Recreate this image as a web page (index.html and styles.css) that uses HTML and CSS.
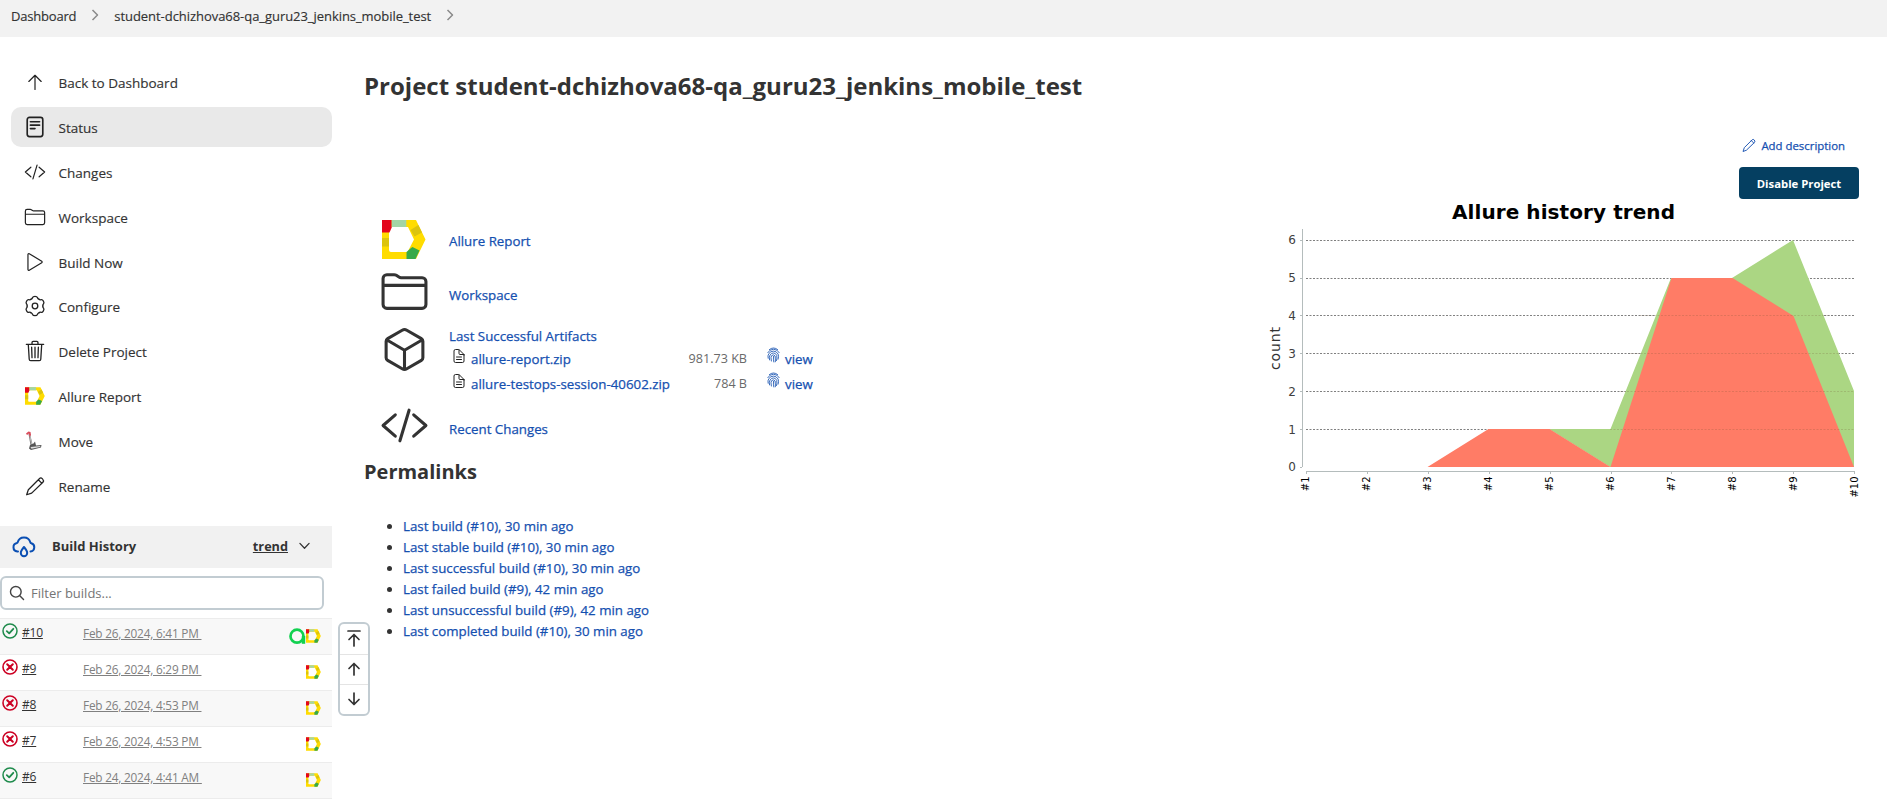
FILE: index.html
```html
<!DOCTYPE html>
<html lang="en">
<head>
<meta charset="utf-8">
<title>student-dchizhova68-qa_guru23_jenkins_mobile_test [Jenkins]</title>
<link rel="stylesheet" href="styles.css">
</head>
<body>
<svg class="defs" aria-hidden="true">
  <symbol id="allure" viewBox="0 0 44 39">
    <path fill="#ffdc00" fill-rule="evenodd" d="M0 0H34L43.5 19.5 34 39H0ZM9 7Q7 7 7 9V30Q7 32 9 32H25.500L32 19.500 26 7Z"/>
    <path fill="#e3061c" d="M0 0H9.700V7.500L7.500 12.500H0Z"/>
    <path fill="#a3d5a6" d="M9.700 0H24.300V7H9.700Z"/>
    <path fill="#dcc40d" d="M36.400 5 40 12.500 32.500 16.500 28.500 10ZM0 18H7V26.500H0Z"/>
    <path fill="#36a94a" d="M24.500 39V32L29 28 30.500 27 37.500 30.500 33.500 39Z"/>
  </symbol>
  <symbol id="folder" viewBox="0 0 512 512"><path d="M440 432H72a40 40 0 01-40-40V120a40 40 0 0140-40h75.890a40 40 0 0122.190 6.720l27.840 18.560A40 40 0 00220.110 112H440a40 40 0 0140 40v240a40 40 0 01-40 40zM32 192H480"/></symbol>
  <symbol id="code" viewBox="0 0 512 512"><path d="M160 368L32 256l128-112M352 368l128-112-128-112M304 96l-96 320"/></symbol>
  <symbol id="pencil" viewBox="0 0 24 24"><path d="M2 22.500 4 16.500 17.500 3Q19 1.500 21 3.500T21.500 7.500L8 20.500ZM16 4.500 20 8.500"/></symbol>
  <symbol id="ok" viewBox="0 0 16 16"><g fill="none" stroke="#1f8b4c" stroke-width="1.500"><circle cx="8" cy="8" r="7"/><path stroke-width="1.800" d="M4.800 8.200 7.200 10.400 11.300 5.800"/></g></symbol>
  <symbol id="fail" viewBox="0 0 16 16"><g fill="none" stroke="#cc0023" stroke-width="1.600"><circle cx="8" cy="8" r="7"/><path stroke-width="2" d="M5.200 5.200 10.800 10.800M10.800 5.200 5.200 10.800"/></g></symbol>
  <symbol id="doc" viewBox="0 0 512 512"><path d="M416 221.250V416a48 48 0 01-48 48H144a48 48 0 01-48-48V96a48 48 0 0148-48h98.750a32 32 0 0122.620 9.370l141.260 141.260a32 32 0 019.370 22.620zM256 56v120a32 32 0 0032 32h120M176 288h160M176 368h160"/></symbol>
  <symbol id="finger" viewBox="0 0 14 17"><path d="M2.500 2.700Q7-1 11.500 2.700M.8 6Q3 2.300 7 2.300T13.200 6M1.200 12Q.5 9 2 7Q4 4.300 7 4.300T12 7.500Q12.900 10 12 13M2.700 13.800Q2 10.500 3.300 8.500 4.700 6.300 7 6.300T10.500 9Q11 11.800 10.300 14.500M4.700 15Q3.700 10.500 5 9.200 7 7.300 8.700 9.500 9.200 12.500 9 15.800M7 10Q6.600 13 7.300 16"/></symbol>
</svg>

<header class="crumbs">
  <span>Dashboard</span>
  <svg class="sep" viewBox="0 0 8 12"><path d="M1.500 1 6.500 6 1.500 11"/></svg>
  <span>student-dchizhova68-qa_guru23_jenkins_mobile_test</span>
  <svg class="sep" viewBox="0 0 8 12"><path d="M1.500 1 6.500 6 1.500 11"/></svg>
</header>

<div class="page">
  <aside class="side">
    <nav class="tasks">
      <a class="task"><svg class="ic" viewBox="0 0 512 512"><path d="M112 244l144-144 144 144M256 120v310"/></svg>Back to Dashboard</a>
      <a class="task active"><svg class="ic" viewBox="0 0 24 24"><g stroke-width="1.800"><rect x="3.500" y="1.500" width="17" height="21" rx="2.500"/><path d="M7 6.300H17M7 10H17M7 13.700H12"/></g></svg>Status</a>
      <a class="task"><svg class="ic"><use href="#code"/></svg>Changes</a>
      <a class="task"><svg class="ic"><use href="#folder"/></svg>Workspace</a>
      <a class="task"><svg class="ic" viewBox="0 0 512 512"><path d="M92 81v350c0 17.440 17 26.520 31 18.160l290-174.370c12.120-7.250 12.120-30.330 0-37.580L123 62.840c-14-8.360-31 .720-31 18.160z"/></svg>Build Now</a>
      <a class="task"><svg class="ic" viewBox="1 1 22 22"><g stroke-width="1.300"><path id="l" d="M8.050 5.160Q9.200 5 9.600 3.500 10 2.300 12 2.300T14.400 3.500Q14.800 5 15.950 5.160"/><use href="#l" transform="rotate(60 12 12)"/><use href="#l" transform="rotate(120 12 12)"/><use href="#l" transform="rotate(180 12 12)"/><use href="#l" transform="rotate(240 12 12)"/><use href="#l" transform="rotate(300 12 12)"/><circle cx="12" cy="12" r="2.800"/></g></svg>Configure</a>
      <a class="task"><svg class="ic" viewBox="20 20 472 472"><path d="M112 112l20 320c.950 18.490 14.400 32 32 32h184c17.670 0 30.870-13.510 32-32l20-320M70 112H442M192 112V72a24 24 0 0124-24h80a24 24 0 0124 24v40M256 176v224M184 176l8 224M328 176l-8 224"/></svg>Delete Project</a>
      <a class="task"><svg class="ic allure"><use href="#allure"/></svg>Allure Report</a>
      <a class="task"><svg class="ic" viewBox="0 0 22 22"><g stroke="none"><path fill="#777" d="M4.500 4 6 3.500 8.500 14.500 6.500 15Z"/><path fill="#c9c9c9" d="M5.300 4.500 6 4.500 8 14 7.200 14Z"/><path fill="#d94a5a" d="M2 3.500 4.500 1.500 6.500 2 7 5 5.500 7 5 3.500 3 5Z"/><path fill="#555" d="M6 15 9.500 13.500 11 11.500 12 15.500 17.500 15 17 17.500 7 20 5 18.500Z"/><path fill="#ddd" d="M6.500 17 16.500 16 16 17 7.500 18.800Z"/></g></svg>Move</a>
      <a class="task"><svg class="ic thin"><use href="#pencil"/></svg>Rename</a>
    </nav>

    <section class="history">
      <div class="history-head">
        <svg class="cloud" viewBox="0 0 24 22"><path d="M6 16.500H5.300A4.300 4.300 0 0 1 5 8Q5.500 8 5.700 7.300A6.500 6.500 0 0 1 18.300 7.300Q18.500 8.200 19.300 8.300A4.200 4.200 0 0 1 18.500 16.500M12 12Q15.200 15.800 15.200 18A3.200 3.200 0 0 1 8.800 18Q8.800 15.800 12 12Z"/></svg>
        <b>Build History</b>
        <a class="trend">trend</a>
        <svg class="chev" viewBox="0 0 12 8"><path d="M1 1.200 6 6.500 11 1.200"/></svg>
      </div>
      <div class="filter">
        <svg viewBox="50 50 412 412"><path d="M221 64a157 157 0 10157 157A157 157 0 00221 64zM338 338L448 448"/></svg>
        <span>Filter builds...</span>
      </div>
      <div class="builds">
        <div class="build"><svg class="st"><use href="#ok"/></svg><a class="num">#10</a><a class="date">Feb 26, 2024, 6:41 PM&nbsp;</a><span class="badges"><svg class="testops" viewBox="0 0 17 17"><circle cx="8" cy="8.200" r="6.500" fill="none" stroke="#12d150" stroke-width="2.700"/><path fill="#12d150" stroke="none" d="M12.800 8H16.200V15.800H12.800Z"/></svg><svg class="mini"><use href="#allure"/></svg></span></div>
        <div class="build"><svg class="st"><use href="#fail"/></svg><a class="num">#9</a><a class="date">Feb 26, 2024, 6:29 PM&nbsp;</a><span class="badges"><svg class="mini"><use href="#allure"/></svg></span></div>
        <div class="build"><svg class="st"><use href="#fail"/></svg><a class="num">#8</a><a class="date">Feb 26, 2024, 4:53 PM&nbsp;</a><span class="badges"><svg class="mini"><use href="#allure"/></svg></span></div>
        <div class="build"><svg class="st"><use href="#fail"/></svg><a class="num">#7</a><a class="date">Feb 26, 2024, 4:53 PM&nbsp;</a><span class="badges"><svg class="mini"><use href="#allure"/></svg></span></div>
        <div class="build"><svg class="st"><use href="#ok"/></svg><a class="num">#6</a><a class="date">Feb 24, 2024, 4:41 AM&nbsp;</a><span class="badges"><svg class="mini"><use href="#allure"/></svg></span></div>
        <div class="build"></div>
      </div>
    </section>
    <div class="pager">
      <span><svg viewBox="0 0 14 18"><path d="M1 2H13M7 17V5.500M2 10.500 7 5.500 12 10.500"/></svg></span>
      <span><svg viewBox="0 0 14 18"><path d="M7 15V4M2 8.500 7 3.500 12 8.500"/></svg></span>
      <span><svg viewBox="0 0 14 18"><path d="M7 3V14M2 9.500 7 14.500 12 9.500"/></svg></span>
    </div>
  </aside>

  <main class="main">
    <h1>Project student-dchizhova68-qa_guru23_jenkins_mobile_test</h1>
    <div class="cols">
      <div class="left">
        <div class="row r1"><svg class="big-allure"><use href="#allure"/></svg><a>Allure Report</a></div>
        <div class="row r2"><svg class="big"><use href="#folder"/></svg><a>Workspace</a></div>
        <div class="row r3">
          <svg class="big cube" viewBox="0 0 512 512"><path d="M448 341.370V170.610A32 32 0 00432.110 143l-152-88.460a47.940 47.940 0 00-48.240 0L79.890 143A32 32 0 0064 170.610v170.760A32 32 0 0079.890 369l152 88.460a48 48 0 0048.240 0l152-88.460A32 32 0 00448 341.370zM69 153.990l187 110 187-110M256 463.990v-200"/></svg>
          <div class="arts">
            <a>Last Successful Artifacts</a>
            <div class="art"><svg class="doc"><use href="#doc"/></svg><a>allure-report.zip</a><span>981.73 KB</span><svg class="fp"><use href="#finger"/></svg><a>view</a></div>
            <div class="art"><svg class="doc"><use href="#doc"/></svg><a>allure-testops-session-40602.zip</a><span>784 B</span><svg class="fp"><use href="#finger"/></svg><a>view</a></div>
          </div>
        </div>
        <div class="row r4"><svg class="big"><use href="#code"/></svg><a>Recent Changes</a></div>
        <h2>Permalinks</h2>
        <ul class="perma">
          <li><a>Last build (#10), 30 min ago</a></li>
          <li><a>Last stable build (#10), 30 min ago</a></li>
          <li><a>Last successful build (#10), 30 min ago</a></li>
          <li><a>Last failed build (#9), 42 min ago</a></li>
          <li><a>Last unsuccessful build (#9), 42 min ago</a></li>
          <li><a>Last completed build (#10), 30 min ago</a></li>
        </ul>
      </div>
      <div class="right">
        <a class="desc"><svg><use href="#pencil"/></svg>Add description</a>
        <button class="disable">Disable Project</button>
        <svg class="chart" viewBox="1259 199 600 301">
          <text class="ct" x="1452" y="219" textLength="223">Allure history trend</text>
          <g class="grid"><path d="M1306 240.500H1854M1306 278.500H1854M1306 315.500H1854M1306 353.500H1854M1306 391.500H1854M1306 429.500H1854"/></g>
          <path fill="#abd683" d="M1549 429H1610.500L1671 278H1732L1793 240 1854 391V467H1610Z"/>
          <path fill="#ff7c66" d="M1427.500 467 1488.500 429H1549.500L1610.500 467 1671.500 278H1732.500L1793.500 316 1854 467Z"/>
          <g class="grid over"><path d="M1640 315.500H1830M1630 353.500H1838M1620 391.500H1854M1610 429.500H1854"/></g>
          <path class="axis" d="M1302.500 229V467M1300 240.500H1302M1300 278.500H1302M1300 315.500H1302M1300 353.500H1302M1300 391.500H1302M1300 429.500H1302M1300 467.500H1302M1306 471.500H1855M1306.500 471V474M1367.500 471V474M1428.500 471V474M1489.500 471V474M1550.500 471V474M1611.500 471V474M1671.500 471V474M1732.500 471V474M1793.500 471V474M1854.500 471V474"/>
          <g class="yl"><text x="1296" y="244">6</text><text x="1296" y="282">5</text><text x="1296" y="320">4</text><text x="1296" y="358">3</text><text x="1296" y="396">2</text><text x="1296" y="433.500">1</text><text x="1296" y="471">0</text></g>
          <text class="yt" transform="translate(1280 370) rotate(-90)" textLength="43">count</text>
          <g class="xl"><text transform="translate(1309 476.500) rotate(-90)">#1</text><text transform="translate(1370 476.500) rotate(-90)">#2</text><text transform="translate(1431 476.500) rotate(-90)">#3</text><text transform="translate(1492 476.500) rotate(-90)">#4</text><text transform="translate(1553 476.500) rotate(-90)">#5</text><text transform="translate(1614 476.500) rotate(-90)">#6</text><text transform="translate(1675 476.500) rotate(-90)">#7</text><text transform="translate(1736 476.500) rotate(-90)">#8</text><text transform="translate(1797 476.500) rotate(-90)">#9</text><text transform="translate(1857.500 476.500) rotate(-90)">#10</text></g>
        </svg>
      </div>
    </div>
  </main>
</div>
</body>
</html>
```
FILE: styles.css
```css
* { box-sizing: border-box; }
body { margin: 0; height: 802px; overflow: hidden; background: #fff; color: #333; font-family: "Open Sans", "Noto Sans", sans-serif; font-size: 13.3px; }
svg { flex: none; display: block; overflow: visible; fill: none; stroke: currentColor; stroke-linecap: round; stroke-linejoin: round; }
.defs { width: 0; height: 0; position: absolute; }
.crumbs { height: 37px; background: #f2f2f2; display: flex; align-items: center; padding: 0 0 5px 11px; font-size: 13px; letter-spacing: -.05px; -webkit-text-stroke: .15px; }
.crumbs span:first-child { letter-spacing: -.2px; }
.sep { width: 8px; height: 12px; margin: 0 15px 2px; stroke: #8a8a8a; stroke-width: 1.5; }
.sep path { stroke-linecap: butt; }

.page { display: flex; }
.side { width: 332px; flex: none; position: relative; }
.tasks { padding: 25px 0 0 11px; height: 489px; display: flex; flex-direction: column; gap: 4.9px; }
.task { height: 40px; flex: none; border-radius: 10px; display: flex; align-items: center; gap: 12.5px; padding: 2px 0 0 13px; font-size: 13.5px; -webkit-text-stroke: .15px; }
.active { background: #e9e9e9; }
.ic { width: 22px; height: 22px; margin-bottom: 2px; stroke-width: 28; color: #222; }
.ic.thin { stroke-width: 1.5; width: 20px; height: 20px; margin: 0 1px 2px; }
.ic.allure { width: 20px; height: 18px; margin: 0 1px 2px; }
#allure path { stroke: none; }

.history-head { height: 42px; background: #f1f1f1; display: flex; align-items: center; padding: 0 22px 2px 12px; font-size: 13px; }
.cloud { width: 24px; height: 22px; color: #0b4fb3; stroke-width: 2; }
.history-head b { margin-left: 16px; flex: 1; }
.trend { font-weight: 700; text-decoration: underline; font-size: 12.7px; }
.chev { width: 11px; height: 8px; margin-left: 11px; stroke-width: 1.4; }
.filter { width: 324px; height: 34px; margin-top: 8px; border: 2px solid #c2ccd2; border-radius: 6px; display: flex; align-items: center; gap: 7px; padding-left: 8px; color: #757575; font-size: 13px; }
.filter svg { width: 14px; height: 14px; color: #444; stroke-width: 42; }
.filter span { padding-bottom: 1px; }
.builds { margin-top: 8px; }
.build { height: 36px; border-top: 1px solid #ececec; display: flex; padding: 4px 11px 0 2px; font-size: 12px; }
.build:nth-child(odd) { background: #f8f8f8; }
.st { width: 16px; height: 16px; }
.num { width: 61px; margin-left: 4px; text-decoration: underline; line-height: 20px; letter-spacing: -.2px; }
.date { color: #808080; text-decoration: underline; font-size: 11.8px; letter-spacing: -.2px; line-height: 20px; }
.badges { margin-left: auto; display: flex; padding-top: 5px; }
.mini { width: 15px; height: 14px; margin-top: 1px; }
.testops { width: 17px; height: 17px; }

.pager { position: absolute; left: 338px; top: 585px; width: 32px; height: 94px; border: 2px solid #c2ccd2; border-radius: 6px; background: #fff; display: grid; grid-template-rows: 1fr 1fr 1fr; }
.pager span { display: grid; place-items: center; padding-bottom: 2px; }
.pager span + span { border-top: 1px solid #e4e4e4; }
.pager svg { width: 14px; height: 18px; stroke-width: 1.7; }

.main { flex: 1; padding: 32px 28px 0 32px; }
h1 { margin: 0; font-size: 24px; line-height: 34px; font-weight: 700; color: #333; white-space: nowrap; }
.cols { display: flex; justify-content: space-between; padding-top: 28px; }
.left { padding-top: 83px; }
.left a, .desc { color: #1550b0; font-weight: 500; -webkit-text-stroke: .25px; }
.row { display: flex; align-items: center; padding-left: 16px; gap: 19px; color: #333; }
.big { width: 49px; height: 49px; stroke-width: 32; margin: 2px 1px 0 0; }
.big-allure { width: 44px; height: 39px; margin-left: 2px; margin-right: 4px; }
.r1 { height: 51px; }
.r1 a { padding-top: 3px; }
.r2 { height: 50px; }
.r2 a { padding-top: 9px; }
.r3 { height: 84px; align-items: flex-start; padding-top: 8px; }
.r4 { height: 50px; }
.r4 a { padding-top: 9px; }
.arts { padding-top: 3px; }
.arts > a { display: block; line-height: 20px; }
.art { display: grid; grid-template-columns: 13px 210px 71px 14px 60px; height: 25px; align-items: center; padding-left: 4px; }
.art .doc { width: 16px; height: 16px; margin: 0 0 5px -2px; stroke-width: 32; color: #222; }
.art a { padding-left: 5px; }
.art span { text-align: right; color: #6a6a6a; font-size: 12.6px; }
.fp { width: 13px; height: 16px; margin: 0 0 7px 20px; color: #1550b0; stroke-width: .9; }
.art a:last-child { padding-left: 24px; }
h2 { margin: 9px 0 0; font-size: 20px; line-height: 28px; font-weight: 700; }
.perma { margin: 30px 0 0; padding: 0 0 0 39px; line-height: 21px; }
.right { width: 600px; display: flex; flex-direction: column; align-items: flex-end; padding-top: 6px; }
.desc { display: flex; align-items: center; gap: 5px; font-size: 11.4px; line-height: 18px; margin-right: 14px; }
.desc svg { width: 14px; height: 14px; stroke-width: 1.6; margin-bottom: 2px; }
.disable { margin-top: 12px; width: 120px; height: 32px; border: 0; border-radius: 4px; background: #053f61; color: #fff; font: 700 11.3px "Open Sans", sans-serif; padding: 0; }
.chart { width: 600px; height: 301px; font-family: "DejaVu Sans", sans-serif; }
.chart path, .chart text { stroke: none; }
.ct { font-size: 20px; font-weight: 700; fill: #000; }
.chart .grid path { stroke: #808080; stroke-width: 1; stroke-dasharray: 2 1.5; stroke-linecap: butt; }
.chart .over path { stroke: #705030; opacity: .22; }
.chart .axis { stroke: #b4bcbc; stroke-width: 1; stroke-linecap: butt; }
.yl { font-size: 12px; text-anchor: end; fill: #404040; }
.yt { font-size: 14px; fill: #333; }
.xl { font-size: 10px; text-anchor: end; fill: #000; }
```
